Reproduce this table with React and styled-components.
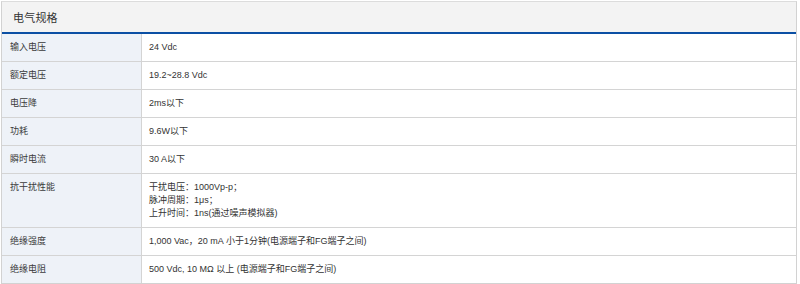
import React from "react";
import styled, { createGlobalStyle } from "styled-components";

const Global = createGlobalStyle`
  html, body { margin: 0; padding: 0; background: #ffffff; }
  body {
    font-family: "Liberation Sans", Arial, "Noto Sans CJK SC", sans-serif;
    color: #333;
  }
`;

const Panel = styled.section`
  width: 796px;
  box-sizing: border-box;
  margin: 1px 0 0 1px;
  border: 1px solid #d2d2d2;
  border-top-color: #dcdcdc;
`;

const Header = styled.div`
  height: 30px;
  display: flex;
  align-items: center;
  padding-left: 11px;
  background: #f3f3f3;
  border-bottom: 2px solid #0b4fa4;
  font-size: 11px;
  color: #333;
  letter-spacing: 0.2px;
`;

const Row = styled.div`
  display: grid;
  grid-template-columns: 140px 1fr;
  border-bottom: ${(p) => (p.$last ? "none" : "1px solid #d4d4d4")};
`;

const Label = styled.div`
  background: #eef2f8;
  border-right: 1px solid #d4d4d4;
  padding: 7px 8px;
  font-size: 9px;
  line-height: 13px;
  color: #3a3a3a;
`;

const Value = styled.div`
  padding: 7px 7px;
  font-size: 9px;
  line-height: 13px;
  color: #333;
`;

const Line = styled.div``;

const rows = [
  ["输入电压", ["24 Vdc"]],
  ["额定电压", ["19.2~28.8 Vdc"]],
  ["电压降", ["2ms以下"]],
  ["功耗", ["9.6W以下"]],
  ["瞬时电流", ["30 A以下"]],
  ["抗干扰性能", ["干扰电压：1000Vp-p；", "脉冲周期：1μs；", "上升时间：1ns(通过噪声模拟器)"]],
  ["绝缘强度", ["1,000 Vac，20 mA 小于1分钟(电源端子和FG端子之间)"]],
  ["绝缘电阻", ["500 Vdc, 10 MΩ 以上 (电源端子和FG端子之间)"]],
];

export default function App() {
  return (
    <>
      <Global />
      <Panel>
        <Header>电气规格</Header>
        {rows.map(([label, lines], i) => (
          <Row key={label} $last={i === rows.length - 1}>
            <Label>{label}</Label>
            <Value>
              {lines.map((l) => (
                <Line key={l}>{l}</Line>
              ))}
            </Value>
          </Row>
        ))}
      </Panel>
    </>
  );
}
